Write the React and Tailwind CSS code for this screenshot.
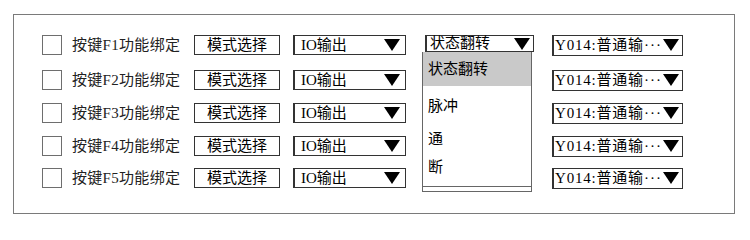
import React from "react";

const font = { fontFamily: '"Liberation Serif", "Noto Sans CJK SC", serif' };

function Tri({ className = "" }) {
  return (
    <svg width="16" height="12" viewBox="0 0 16 12" className={`shrink-0 ${className}`}>
      <polygon points="0,0 16,0 8,12" fill="#000" />
    </svg>
  );
}

const rows = ["F1", "F2", "F3", "F4", "F5"];
const gaps = ["mt-0", "mt-[15px]", "mt-[13px]", "mt-[13px]", "mt-[12px]"];

export default function App() {
  return (
    <div className="w-[750px] h-[233px] bg-white pt-[14px] pl-[13px] text-black" style={font}>
      <div className="relative w-[722px] h-[200px] border border-[#7a7a7a]">
        <div className="flex flex-col pt-[20px] pl-[28px]">
          {rows.map((f, i) => (
            <div key={f} className={`flex items-center h-[20px] ${gaps[i]}`}>
              <div className="w-[20px] h-[20px] border border-[#6e6e6e] shrink-0" />
              <div className="ml-[10px] w-[122px] text-[15px] leading-none text-[#222] shrink-0 whitespace-nowrap tracking-[0.3px]">
                按键{f}功能绑定
              </div>
              <div className="w-[86px] h-[20px] border border-[#333] flex items-center justify-center text-[15px] leading-none shrink-0">
                模式选择
              </div>
              <div className="ml-[13px] w-[113px] h-[20px] border border-[#333] border-l-2 flex items-center justify-between pl-[6px] pr-[5px] text-[15px] leading-none shrink-0">
                <span>IO输出</span>
                <Tri />
              </div>
              <div className="ml-[19px] w-[109px] h-[20px] shrink-0">
                {i === 0 && (
                  <div className="w-[109px] h-[17px] border border-[#333] border-l-2 flex items-center justify-between pl-[3px] pr-[3px] text-[15px] leading-none">
                    <span>状态翻转</span>
                    <Tri />
                  </div>
                )}
              </div>
              <div className="ml-[18px] w-[131px] h-[21px] border border-[#333] border-l-2 flex items-center justify-between pl-[1px] pr-[3px] text-[15px] leading-none shrink-0 whitespace-nowrap overflow-hidden">
                <span className="tracking-[0.8px]">Y014:普通输<span className="tracking-[1px]">···</span></span>
                <Tri />
              </div>
            </div>
          ))}
        </div>
        <div className="absolute left-[408px] top-[37px] w-[110px] h-[140px] bg-white border-x border-[#666] flex flex-col">
          <div className="h-[34px] bg-[#c9c9c9] flex items-center pl-[5px] text-[15px] leading-none">状态翻转</div>
          <div className="h-[30px] flex items-end pl-[5px] text-[15px] leading-none pb-[2px]">脉冲</div>
          <div className="h-[34px] flex items-end pl-[5px] text-[15px] leading-none pb-[3px]">通</div>
          <div className="h-[28px] flex items-end pl-[5px] text-[15px] leading-none pb-[3px]">断</div>
          <div className="mt-auto h-[6px] border-y border-[#666] -mx-px" />
        </div>
      </div>
    </div>
  );
}
